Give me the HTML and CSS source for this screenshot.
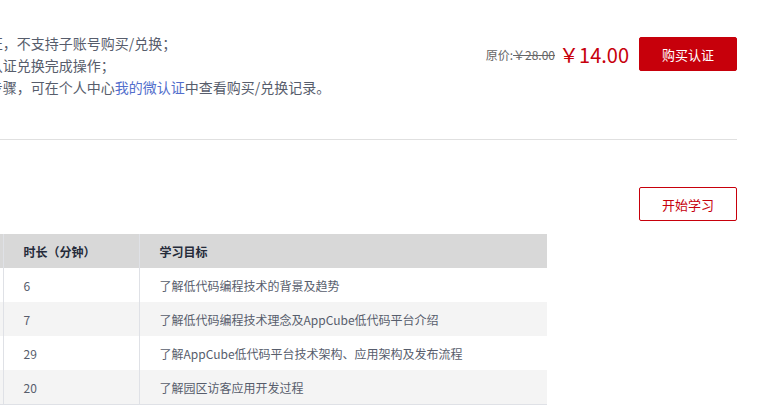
FILE: index.html
```html
<!DOCTYPE html>
<html lang="zh-CN">
<head>
  <meta charset="UTF-8">
  <meta name="viewport" content="width=device-width, initial-scale=1.0">
  <title>微认证详情</title>
  <link rel="stylesheet" href="styles.css">
</head>
<body>

<div class="page">
  <div class="buy">
    <ul class="notes">
      <li>1、本微认证仅支持实名认证，不支持子账号购买/兑换；</li>
      <li>2、持兑换码用户请进行微认证兑换完成操作；</li>
      <li>3、完成认证的购买或兑换步骤，可在个人中心<a href="#">我的微认证</a>中查看购买/兑换记录。</li>
    </ul>
    <div class="price">
      <span class="orig">原价:<s>￥28.00</s></span>
      <span class="now">￥14.00</span>
      <button class="btn btn-buy" type="button">购买认证</button>
    </div>
  </div>

  <div class="study">
    <button class="btn btn-line" type="button">开始学习</button>
  </div>

  <table class="course">
    <colgroup>
      <col class="col-name">
      <col class="col-time">
      <col class="col-goal">
    </colgroup>
    <thead>
      <tr>
        <th>课程名称</th>
        <th>时长（分钟）</th>
        <th>学习目标</th>
      </tr>
    </thead>
    <tbody>
      <tr>
        <td>低代码简介</td>
        <td>6</td>
        <td>了解低代码编程技术的背景及趋势</td>
      </tr>
      <tr>
        <td>平台介绍</td>
        <td>7</td>
        <td>了解低代码编程技术理念及AppCube低代码平台介绍</td>
      </tr>
      <tr>
        <td>技术架构</td>
        <td>29</td>
        <td>了解AppCube低代码平台技术架构、应用架构及发布流程</td>
      </tr>
      <tr>
        <td>应用开发</td>
        <td>20</td>
        <td>了解园区访客应用开发过程</td>
      </tr>
    </tbody>
  </table>
</div>

</body>
</html>
```

FILE: styles.css
```css
body {
  margin: 0;
  background-color: #fff;
  color: #575d6c;
  font-family: "Noto Sans CJK SC", "Noto Sans", sans-serif;
  overflow: hidden;
}

.page {
  margin-left: -173px;
  width: 910px;
}

.buy {
  display: flex;
  justify-content: space-between;
  align-items: flex-start;
  padding: 32px 0 41px;
  border-bottom: 1px solid #e0e0e0;
}

.notes {
  list-style: none;
  margin: 0;
  padding: 0;
  font-size: 14px;
  line-height: 22px;
  white-space: nowrap;
}

.notes a {
  color: #526ecc;
  text-decoration: none;
}

.price {
  display: flex;
  align-items: center;
  margin-top: 5px;
}

.orig {
  font-size: 12px;
  color: #666;
}

.orig s {
  text-decoration-thickness: 1px;
}

.now {
  font-size: 20px;
  color: #c7000b;
  margin: 0 10px 0 4px;
}

.btn {
  width: 98px;
  height: 34px;
  box-sizing: border-box;
  border: 1px solid #c7000b;
  border-radius: 2px;
  font-family: inherit;
  font-size: 13px;
  cursor: pointer;
}

.btn-buy {
  background-color: #c7000b;
  color: #fff;
}

.btn-line {
  background-color: #fff;
  color: #c7000b;
}

.study {
  display: flex;
  justify-content: flex-end;
  margin-top: 47px;
}

.course {
  margin-top: 13px;
  width: 720px;
  table-layout: fixed;
  border-collapse: collapse;
  font-size: 12px;
}

.col-name {
  width: 176px;
}

.col-time {
  width: 136px;
}

.course th,
.course td {
  height: 34px;
  padding: 0 20px;
  text-align: left;
  white-space: nowrap;
}

.course th + th,
.course td + td {
  border-left: 1px solid #dfe1e6;
}

.course th {
  background-color: #d8d8d8;
  color: #252b3a;
  font-weight: bold;
}

.course tbody tr:nth-child(even) {
  background-color: #f4f4f4;
}

.course tbody tr:last-child td {
  border-bottom: 1px solid #dfe1e6;
}
```
